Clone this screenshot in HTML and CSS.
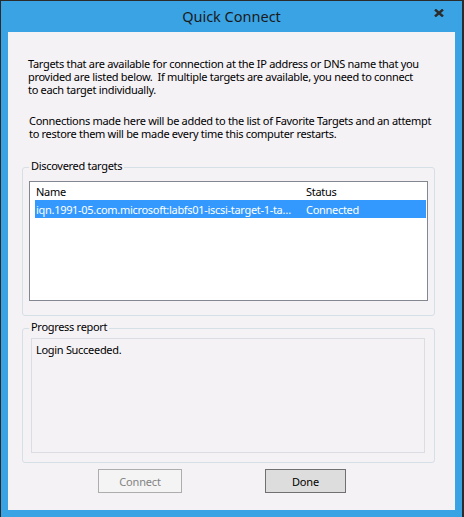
FILE: index.html
```html
<!DOCTYPE html>
<html lang="en">
<head>
    <meta charset="UTF-8">
    <title>Quick Connect</title>
    <link rel="stylesheet" href="styles.css">
</head>
<body>
    <div class="window">
        <div class="titlebar">
            <span class="title">Quick Connect</span>
            <span class="close">
                <svg width="10" height="8" viewBox="0 0 10 8">
                    <path d="M1 0.5 L9 7.5 M9 0.5 L1 7.5" stroke="#2b2b2b" stroke-width="2.4" fill="none"/>
                </svg>
            </span>
        </div>
        <div class="content">
            <p class="intro first">Targets that are available for connection at the IP address or DNS name that you<br>provided are listed below.&nbsp; If multiple targets are available, you need to connect<br>to each target individually.</p>
            <p class="intro second">Connections made here will be added to the list of Favorite Targets and an attempt<br>to restore them will be made every time this computer restarts.</p>

            <fieldset class="group targets">
                <legend>Discovered targets</legend>
                <div class="listview">
                    <div class="lv-row lv-header">
                        <span class="col-name">Name</span>
                        <span class="col-status">Status</span>
                    </div>
                    <div class="lv-row selected">
                        <span class="col-name">iqn.1991-05.com.microsoft:labfs01-iscsi-target-1-ta…</span>
                        <span class="col-status">Connected</span>
                    </div>
                </div>
            </fieldset>

            <fieldset class="group progress">
                <legend>Progress report</legend>
                <div class="report">Login Succeeded.</div>
            </fieldset>

            <div class="buttons">
                <button class="btn connect" disabled>Connect</button>
                <button class="btn done">Done</button>
            </div>
        </div>
    </div>
</body>
</html>
```

FILE: styles.css
```css
* {
    margin: 0;
    padding: 0;
    box-sizing: border-box;
}

body {
    font-family: "Segoe UI", "Noto Sans", sans-serif;
    font-size: 11px;
    letter-spacing: -0.3px;
    color: #000;
    background: #fff;
}

.window {
    width: 464px;
    height: 517px;
    background: #3aa3e4;
    border-top: 1px solid #2b2b2b;
    border-left: 1px solid #2b2b2b;
    border-right: 2px solid #2b2b2b;
    padding: 0 7px 7px 7px;
    display: flex;
    flex-direction: column;
}

.titlebar {
    height: 31px;
    display: flex;
    align-items: center;
    justify-content: center;
    position: relative;
}

.title {
    font-size: 14.5px;
    letter-spacing: 0;
    color: #1a1a1a;
    margin-bottom: 1px;
}

.close {
    position: absolute;
    right: 11px;
    top: 8px;
    display: flex;
}

.content {
    flex: 1;
    background: #f5f2f6;
    display: flex;
    flex-direction: column;
}

.intro {
    line-height: 13px;
    white-space: nowrap;
    margin-left: 20px;
}

.intro.first {
    margin-top: 25px;
}

.intro.second {
    margin-top: 18px;
    margin-left: 21px;
}

.group {
    border: 1px solid #d5dfe6;
    border-radius: 3px;
    margin-left: 14px;
    width: 413px;
}

.group legend {
    padding: 0 2px 4px 2px;
    line-height: 15px;
}

.targets {
    margin-top: 18px;
    padding: 4px 6px 14px 6px;
}

.progress legend {
    margin-left: -2px;
}

.listview {
    height: 120px;
    background: #fff;
    border: 1px solid #828790;
    padding: 0 1px 0 5px;
}

.lv-row {
    display: flex;
    height: 18px;
    align-items: center;
    white-space: nowrap;
}

.lv-row .col-name {
    width: 270px;
    padding-left: 1px;
    overflow: hidden;
    text-overflow: ellipsis;
}

.lv-row .col-status {
    padding-left: 1px;
}

.lv-row.selected {
    background: #3399ff;
    color: #fff;
}

.progress {
    margin-top: 3px;
    padding: 0 9px 9px 8px;
}

.report {
    height: 115px;
    border: 1px solid #dcdde2;
    padding: 3px 4px;
}

.buttons {
    display: flex;
    margin-top: 6px;
    padding-left: 90px;
}

.btn {
    font-family: inherit;
    font-size: 11px;
    letter-spacing: -0.15px;
    height: 24px;
}

.btn.connect {
    width: 84px;
    background: #f4f4f4;
    border: 1px solid #adadad;
    color: #838383;
}

.btn.done {
    width: 81px;
    margin-left: 83px;
    background: #dddddd;
    border: 1px solid #707070;
    color: #000;
}
```
